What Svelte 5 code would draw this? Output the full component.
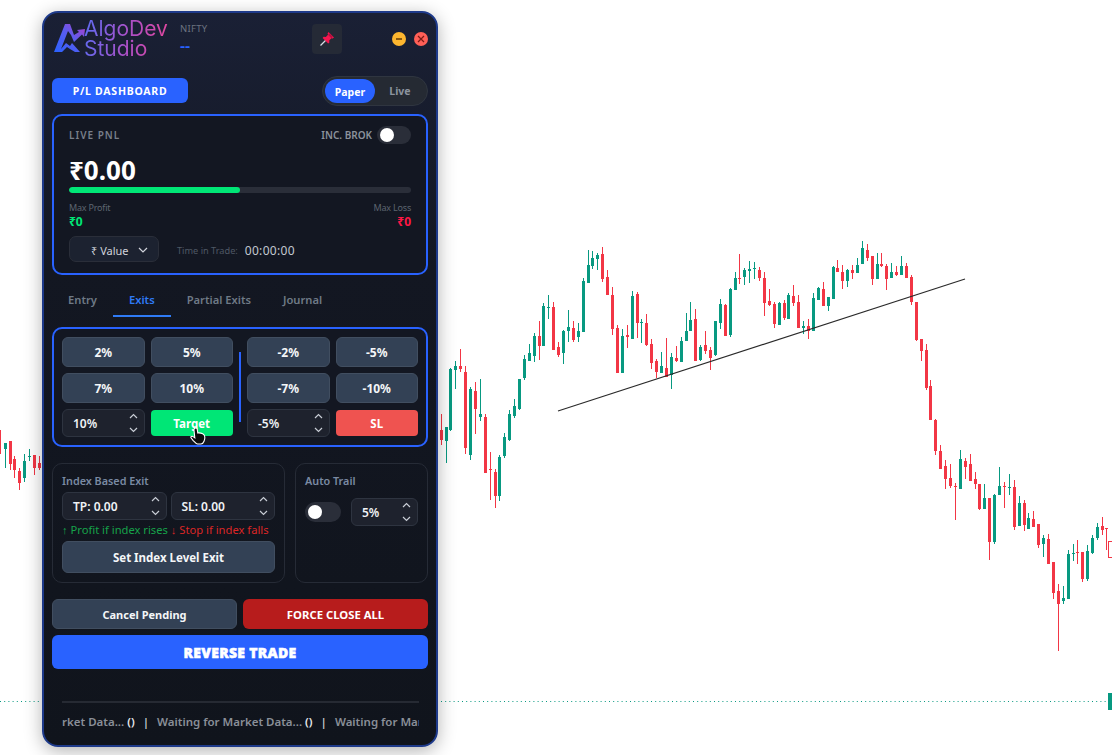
<script>
  // candles: x, wick top, body top, body bottom, wick bottom (3x crop coords), g/r
  const midA = `4 552 600 630 645 r,19 590 592 632 698 g,31 415 417 600 602 g,46 393 408 420 476 g,61 357 408 417 426 r,76 408 426 654 672 r,91 471 477 675 690 g,106 456 483 537 612 r,121 447 552 561 573 g,136 552 561 729 729 r,151 666 717 720 810 r,166 717 726 798 834 r,178 675 681 798 813 g,193 609 621 678 684 g,208 540 552 630 633 g,223 507 528 558 564 g,238 447 447 537 540 g,253 375 387 444 450 g,268 342 369 393 393 g,283 309 318 378 396 g,298 273 318 348 390 r,310 219 228 348 348 g,325 195 231 234 267 g,340 216 231 360 360 r,355 336 351 375 381 r,370 300 303 369 402 g,385 240 291 303 336 g,400 273 294 330 336 r,415 279 303 321 336 g,430 144 153 306 306 g,445 60 105 159 159 g,457 63 84 108 117 g,472 69 75 87 120 g,487 51 72 147 156 r,502 120 141 195 195 r,517 171 195 297 315 r,532 285 294 429 429 r,547 297 318 429 429 g,562 285 315 321 354 r,577 183 198 327 327 g,592 186 192 279 324 r,604 267 276 279 339 g,619 252 279 345 348 r,634 327 342 399 417 r,649 387 393 426 444 r,664 366 408 429 429 g,679 324 414 441 441 r,694 369 381 435 477 g,709 348 384 393 396 r,724 321 333 396 396 g,739 249 303 333 333 g,751 216 270 303 303 g,766 237 267 393 393 r,781 345 351 390 393 g,796 303 345 363 372 r,811 351 360 384 420 r,826 273 273 375 378 g,841 207 222 279 297 g,856 222 225 318 318 r,871 174 177 315 321 g,886 126 144 180 180 g,898 72 144 147 162 r,913 114 120 141 165 g,928 93 117 123 159 g,943 96 114 117 147 g,958 111 120 144 153 r,973 126 144 219 258 r,988 177 213 225 228 r,1003 216 222 282 294 r,1018 216 219 285 285 g`
  const midB = `13 210 219 264 270 r,25 189 195 267 267 g,40 165 198 219 228 r,55 195 216 294 294 r,70 273 288 294 312 g,85 267 288 303 327 r,100 189 204 303 303 g,115 171 174 210 210 g,130 156 177 228 228 r,145 201 201 228 243 g,160 108 111 207 207 g,172 90 114 126 126 r,187 105 126 153 177 r,202 117 120 153 171 g,217 105 120 129 147 r,232 84 105 129 129 g,247 33 54 102 102 g,262 42 60 84 93 r,277 78 78 147 165 r,292 69 102 147 147 g,304 69 102 108 111 r,319 102 108 147 180 r,334 99 126 144 144 g,349 108 126 135 138 r,364 78 108 135 135 g,379 99 108 144 144 r,394 135 141 216 225 r,409 216 216 330 333 r,424 327 327 363 393 r,439 342 360 474 480 r,451 450 468 570 570 r,466 567 570 663 675 r,481 645 663 717 717 r,496 690 708 747 777 r,511 702 744 768 774 r,526 759 768 771 870 r,541 660 687 777 777 g,556 684 693 711 747 r,571 672 702 753 753 r,586 726 747 762 777 r`
  const midC = `238 42 42 117 120 r,253 42 84 117 117 g,268 84 84 216 270 r,283 72 75 216 222 g,298 -9 48 75 75 g,313 36 48 51 114 r,328 12 51 54 75 g,343 30 51 171 180 r,358 78 99 168 168 g,373 90 99 165 183 r,385 129 144 177 177 g,400 123 147 171 171 r,415 162 162 225 234 r,430 195 204 222 261 g,445 192 207 282 282 r,460 276 276 369 387 r,475 342 363 402 543 r,490 348 384 393 402 g,505 240 252 387 387 g,520 222 249 252 273 g,532 210 246 249 282 r,547 246 246 327 336 r,562 225 243 327 333 g,577 195 204 249 252 g,592 159 171 204 210 g,607 141 168 180 195 r,619 174 174 174 240 r`
  const left = `-3 27 30 102 102 r,16 70 70 87 144 g,31 63 63 132 150 r,43 108 117 150 174 r,58 144 153 189 210 r,73 102 123 174 186 g,88 87 108 111 123 g,103 105 105 144 165 r,118 108 129 144 150 r`

  function parse(str, ox, oy) {
    return str.split(',').map((row) => {
      const p = row.split(' ')
      const n = p.slice(0, 5).map(Number)
      return {
        x: Math.round(ox + n[0] / 3),
        wt: Math.round(oy + n[1] / 3),
        bt: Math.round(oy + n[2] / 3),
        bb: Math.round(oy + n[3] / 3),
        wb: Math.round(oy + n[4] / 3),
        color: p[5] === 'g' ? '#089981' : '#f23645'
      }
    })
  }

  const candles = [
    ...parse(left, 0, 420),
    ...parse(midA, 440, 230),
    ...parse(midB, 780, 230),
    ...parse(midC, 900, 470)
  ]

  const exitsLeft = ['2%', '5%', '7%', '10%']
  const exitsRight = ['-2%', '-5%', '-7%', '-10%']
</script>

{#snippet spinner()}
  <svg class="spin" width="9" height="22" viewBox="0 0 9 22" fill="none" stroke="#c9ced6" stroke-width="1.2">
    <path d="M1 6 L4.5 2.5 L8 6" />
    <path d="M1 16 L4.5 19.5 L8 16" />
  </svg>
{/snippet}

<div class="desk">
  <svg class="chart" width="1112" height="755" viewBox="0 0 1112 755">
    {#each candles as c}
      <rect x={c.x} y={c.wt} width="1" height={Math.max(c.wb - c.wt, 1)} fill={c.color} />
      <rect x={c.x - 1} y={c.bt} width="3" height={Math.max(c.bb - c.bt, 1)} fill={c.color} />
    {/each}
    <line x1="558" y1="411" x2="965" y2="279" stroke="#2a2a2a" stroke-width="1.1" />
    <line x1="0" y1="701.5" x2="1108" y2="701.5" stroke="#089981" stroke-width="1" stroke-dasharray="1 3.2" />
    <rect x="1108" y="693" width="4" height="17" fill="#089981" />
    <rect x="1108.5" y="541.5" width="6" height="16" fill="#fff" stroke="#f23645" />
  </svg>

  <div class="panel">
    <header class="head">
      <div class="brand">
        <svg class="mark" width="34" height="32" viewBox="0 0 34 32" fill="none">
          <defs>
            <linearGradient id="mk" x1="0" y1="1" x2="1" y2="0">
              <stop offset="0" stop-color="#2962ff" />
              <stop offset="0.55" stop-color="#5a5cf0" />
              <stop offset="1" stop-color="#b03fc8" />
            </linearGradient>
          </defs>
          <path d="M1 29 L12 1 L17 1 L21 12 L26 9 L24 7 L32 6 L31 14 L29 11.5 L21 19 L18 12 L15 8 L8 26 L13 20 L17 23 L19 20 L27 29 L22 29 L17 26 L14 24 L9 29 Z" fill="url(#mk)" />
        </svg>
        <div class="word">AlgoDev<br />Studio</div>
      </div>
      <div class="sym">
        <span class="sym-name">NIFTY</span>
        <span class="sym-price">--</span>
      </div>
      <button class="pin" aria-label="Pin">
        <svg width="16" height="16" viewBox="0 0 16 16">
          <path d="M1.5 14.5 L7 9" stroke="#d8dde6" stroke-width="1.3" />
          <path d="M9.5 1 L15 6.5 L13.6 7.6 L12.4 7.2 L10.2 9.4 L10.4 11.6 L9.2 12.6 L3.6 7 L4.6 5.8 L6.8 6 L9 3.8 L8.6 2.4 Z" fill="#f5164f" />
          <path d="M10.6 2.2 L14 5.8 L12.4 7.2 L9 3.8 Z" fill="#b8103f" />
        </svg>
      </button>
      <div class="wins">
        <span class="dot min"><i></i></span>
        <span class="dot close">
          <svg width="8" height="8" viewBox="0 0 8 8" stroke="#7a1a14" stroke-width="1.2"><path d="M1 1 L7 7 M7 1 L1 7" /></svg>
        </span>
      </div>
    </header>

    <div class="actions">
      <button class="dash">P/L DASHBOARD</button>
      <div class="mode">
        <span class="mode-on">Paper</span>
        <span class="mode-off">Live</span>
      </div>
    </div>

    <section class="card pnl">
      <div class="pnl-top">
        <span class="pnl-label">LIVE PNL</span>
        <div class="brok">
          <span>INC. BROK</span>
          <span class="switch small"><i></i></span>
        </div>
      </div>
      <div class="pnl-value">₹0.00</div>
      <div class="bar"><div class="fill" style="width: 50%"></div></div>
      <div class="limits">
        <div>
          <div class="lim-label">Max Profit</div>
          <div class="lim-val up">₹0</div>
        </div>
        <div class="right">
          <div class="lim-label">Max Loss</div>
          <div class="lim-val down">₹0</div>
        </div>
      </div>
      <div class="pnl-foot">
        <div class="select">
          <span>₹ Value</span>
          <svg width="10" height="6" viewBox="0 0 10 6" fill="none" stroke="#d1d4dc" stroke-width="1.2"><path d="M1 1 L5 5 L9 1" /></svg>
        </div>
        <span class="time-label">Time in Trade:</span>
        <span class="time">00:00:00</span>
      </div>
    </section>

    <nav class="tabs">
      <span class="tab">Entry</span>
      <span class="tab active">Exits</span>
      <span class="tab">Partial Exits</span>
      <span class="tab">Journal</span>
    </nav>

    <section class="card exits">
      <div class="exit-grid">
        {#each exitsLeft as label}
          <button class="btn">{label}</button>
        {/each}
        <div class="field"><span>10%</span>{@render spinner()}</div>
        <button class="btn-target">Target</button>
      </div>
      <div class="divider"></div>
      <div class="exit-grid">
        {#each exitsRight as label}
          <button class="btn">{label}</button>
        {/each}
        <div class="field"><span>-5%</span>{@render spinner()}</div>
        <button class="btn-sl">SL</button>
      </div>
    </section>

    <div class="lower">
      <section class="box index">
        <div class="box-title">Index Based Exit</div>
        <div class="index-fields">
          <div class="field"><span>TP: 0.00</span>{@render spinner()}</div>
          <div class="field"><span>SL: 0.00</span>{@render spinner()}</div>
        </div>
        <div class="hint"><span class="hint-up">↑ Profit if index rises</span> <span class="hint-down">↓ Stop if index falls</span></div>
        <button class="btn set">Set Index Level Exit</button>
      </section>
      <section class="box trail">
        <div class="box-title">Auto Trail</div>
        <div class="trail-row">
          <span class="switch"><i></i></span>
          <div class="field"><span>5%</span>{@render spinner()}</div>
        </div>
      </section>
    </div>

    <div class="bottom-btns">
      <button class="btn cancel">Cancel Pending</button>
      <button class="force">FORCE CLOSE ALL</button>
    </div>
    <button class="reverse">REVERSE TRADE</button>

    <footer class="ticker">
      <div class="ticker-text">rket Data... <b>()</b><b class="sep">|</b>Waiting for Market Data... <b>()</b><b class="sep">|</b>Waiting for Market Data... <b>()</b></div>
    </footer>
  </div>

  <svg class="cursor" width="16" height="18" viewBox="0 0 16 18">
    <path d="M4.5 1.5 C5.5 0.5 7 1 7.2 2.2 L7.8 6 C9 5.6 12.5 6.2 14 7.8 C15 9.5 14.8 12.5 14 14.2 C13.4 15.8 12.5 17 11 17 L7.5 17 C6 16.8 4.5 15 3 13.4 L1 10.8 C0.6 9.8 1.6 8.8 2.8 9.4 L4.8 10.8 L4 3.2 C3.9 2.6 4.1 2 4.5 1.5 Z" fill="#0b0b0b" stroke="#fff" stroke-width="1.1" />
  </svg>
</div>

<style>
  :global(body) {
    margin: 0;
    background: #fff;
    overflow: hidden;
  }

  .desk {
    position: relative;
    width: 1112px;
    height: 755px;
    overflow: hidden;
    font-family: "Noto Sans", "Liberation Sans", sans-serif;
  }

  .chart {
    position: absolute;
    left: 0;
    top: 0;
  }

  .cursor {
    position: absolute;
    left: 190px;
    top: 427px;
  }

  button {
    font-family: inherit;
    border: none;
    margin: 0;
    padding: 0;
    color: #fff;
  }

  .panel {
    position: absolute;
    left: 42px;
    top: 11px;
    width: 396px;
    height: 736px;
    box-sizing: border-box;
    padding: 0 8px;
    display: flex;
    flex-direction: column;
    border: 2px solid #1e3a8a;
    border-radius: 16px;
    background: linear-gradient(180deg, #1a2035 0%, #131722 35%, #10141c 100%);
    box-shadow: 0 4px 18px rgba(0, 0, 0, 0.3);
  }

  .head {
    display: flex;
    align-items: center;
    height: 52px;
    margin-bottom: 11px;
    flex: none;
  }

  .brand {
    display: flex;
    align-items: center;
    width: 127px;
    margin-left: 1px;
  }

  .mark {
    flex: none;
  }

  .word {
    margin-left: -3px;
    font-family: Inter, sans-serif;
    font-size: 21px;
    line-height: 20px;
    font-weight: 400;
    background: linear-gradient(100deg, #5c6cf5 0%, #b04fc4 55%, #e8469a 100%);
    -webkit-background-clip: text;
    background-clip: text;
    color: transparent;
  }

  .sym {
    display: flex;
    flex-direction: column;
    width: 132px;
  }

  .sym-name {
    font-size: 9.5px;
    line-height: 13px;
    letter-spacing: 0.3px;
    color: #6b7280;
  }

  .sym-price {
    font-size: 16px;
    line-height: 22px;
    font-weight: 600;
    color: #2962ff;
  }

  .pin {
    width: 30px;
    height: 30px;
    display: flex;
    align-items: center;
    justify-content: center;
    background: #252a36;
    border-radius: 4px;
  }

  .wins {
    display: flex;
    gap: 8px;
    margin-left: auto;
  }

  .dot {
    width: 14px;
    height: 14px;
    border-radius: 50%;
    display: flex;
    align-items: center;
    justify-content: center;
  }

  .dot.min {
    background: #fdb62f;
  }

  .dot.min i {
    width: 6px;
    height: 1.5px;
    background: #8a5a10;
  }

  .dot.close {
    background: #ff5f57;
  }

  .actions {
    display: flex;
    align-items: center;
    justify-content: space-between;
    flex: none;
    height: 30px;
    margin-bottom: 8px;
  }

  .dash {
    width: 136px;
    height: 25px;
    margin-top: -1px;
    background: #2962ff;
    border-radius: 6px;
    font-size: 10.5px;
    font-weight: 700;
    letter-spacing: 0.75px;
  }

  .mode {
    box-sizing: border-box;
    width: 106px;
    height: 30px;
    padding: 2px;
    display: flex;
    align-items: center;
    background: #252a33;
    border: 1px solid #2f3540;
    border-radius: 15px;
    font-size: 10.5px;
    font-weight: 700;
  }

  .mode-on {
    width: 50px;
    height: 24px;
    line-height: 26px;
    text-align: center;
    border-radius: 12px;
    background: #2962ff;
    color: #fff;
  }

  .mode-off {
    flex: 1;
    line-height: 26px;
    text-align: center;
    color: #8b939e;
  }

  .card {
    box-sizing: border-box;
    flex: none;
    border: 2px solid #2962ff;
    border-radius: 10px;
    background: #131722;
  }

  .pnl {
    height: 161px;
    padding: 9px 15px 0;
  }

  .pnl-top {
    display: flex;
    align-items: center;
    justify-content: space-between;
    height: 20px;
  }

  .pnl-label {
    font-size: 10px;
    font-weight: 600;
    letter-spacing: 1px;
    color: #787f8a;
  }

  .brok {
    display: flex;
    align-items: center;
    gap: 5px;
    font-size: 10px;
    font-weight: 600;
    color: #8b929c;
  }

  .switch {
    position: relative;
    display: block;
    flex: none;
    width: 36px;
    height: 20px;
    border-radius: 10px;
    background: #2a2e39;
  }

  .switch i {
    position: absolute;
    left: 3px;
    top: 3px;
    width: 14px;
    height: 14px;
    border-radius: 50%;
    background: #fff;
  }

  .switch.small {
    width: 34px;
    height: 18px;
    border-radius: 9px;
  }

  .switch.small i {
    top: 2px;
  }

  .pnl-value {
    margin-top: 10px;
    font-size: 26px;
    line-height: 31px;
    font-weight: 700;
    color: #fff;
  }

  .bar {
    height: 6px;
    margin-top: 1px;
    border-radius: 3px;
    background: #2a2e39;
    overflow: hidden;
  }

  .fill {
    height: 100%;
    border-radius: 3px;
    background: #00e676;
  }

  .limits {
    display: flex;
    justify-content: space-between;
    margin-top: 8px;
  }

  .right {
    text-align: right;
  }

  .lim-label {
    font-size: 9px;
    letter-spacing: -0.2px;
    line-height: 13px;
    color: #5d6570;
  }

  .lim-val {
    font-size: 12px;
    line-height: 15px;
    font-weight: 700;
  }

  .up {
    color: #00e676;
  }

  .down {
    color: #ff1744;
  }

  .pnl-foot {
    display: flex;
    align-items: center;
    margin-top: 7px;
  }

  .select {
    box-sizing: border-box;
    width: 90px;
    height: 26px;
    padding: 2px 0 0 21px;
    display: flex;
    align-items: center;
    gap: 9px;
    background: #1c2230;
    border: 1px solid #2a2e39;
    border-radius: 7px;
    font-size: 11px;
    color: #d1d4dc;
  }

  .time-label {
    margin: 2px 0 0 18px;
    font-size: 9.2px;
    color: #4f5865;
  }

  .time {
    margin: 2px 0 0 7px;
    font-size: 12px;
    letter-spacing: 0.3px;
    color: #c3c8d0;
  }

  .tabs {
    display: flex;
    flex: none;
    height: 33px;
    margin: 9px 0 10px;
  }

  .tab {
    padding: 0 16px;
    height: 33px;
    box-sizing: border-box;
    line-height: 31px;
    font-size: 11.2px;
    font-weight: 600;
    color: #6f7a86;
  }

  .tab.active {
    color: #2f7bf6;
    border-bottom: 2px solid #2f7bf6;
  }

  .exits {
    display: flex;
    height: 120px;
    padding: 8px 8px 0;
    gap: 6px;
  }

  .exit-grid {
    flex: 1;
    display: grid;
    grid-template-columns: 1fr 1fr;
    grid-template-rows: 30px 30px 28px;
    gap: 6px;
  }

  .divider {
    flex: none;
    width: 2px;
    height: 70px;
    margin-top: 15px;
    background: #2962ff;
  }

  .btn {
    box-sizing: border-box;
    background: #334155;
    border: 1px solid #414e60;
    border-radius: 6px;
    font-size: 12px;
    font-weight: 700;
    color: #f4f6f8;
  }

  .btn-target,
  .btn-sl {
    height: 26px;
    border-radius: 4px;
    font-size: 11.5px;
    font-weight: 700;
    margin-top: 1px;
  }

  .btn-target {
    background: #00e676;
  }

  .btn-sl {
    background: #ef5350;
  }

  .field {
    box-sizing: border-box;
    height: 28px;
    padding: 0 6px 0 10px;
    display: flex;
    align-items: center;
    justify-content: space-between;
    background: #1e222d;
    border: 1px solid #2e3440;
    border-radius: 6px;
    font-size: 12px;
    font-weight: 600;
    color: #f0f2f5;
  }

  .lower {
    display: flex;
    flex: none;
    gap: 10px;
    height: 120px;
    margin: 16px 0;
  }

  .box {
    box-sizing: border-box;
    border: 1px solid #262b36;
    border-radius: 10px;
    padding: 9px;
  }

  .index {
    width: 233px;
    display: flex;
    flex-direction: column;
  }

  .trail {
    flex: 1;
  }

  .box-title {
    font-size: 10.8px;
    line-height: 16px;
    font-weight: 600;
    color: #7a8aa3;
  }

  .index-fields {
    display: flex;
    gap: 4px;
    margin-top: 3px;
  }

  .index-fields .field {
    flex: 1;
  }

  .hint {
    height: 20px;
    line-height: 20px;
    font-size: 11.2px;
    white-space: nowrap;
  }

  .hint-up {
    color: #16a34a;
  }

  .hint-down {
    color: #dc2626;
  }

  .set {
    height: 32px;
    margin-top: 1px;
    font-size: 11.5px;
  }

  .trail-row {
    display: flex;
    align-items: center;
    justify-content: space-between;
    margin-top: 9px;
  }

  .trail-row .field {
    width: 67px;
  }

  .bottom-btns {
    display: grid;
    grid-template-columns: 1fr 1fr;
    flex: none;
    gap: 6px;
    height: 30px;
    margin-bottom: 6px;
  }

  .cancel {
    font-size: 11px;
  }

  .force {
    background: #b71c1c;
    border-radius: 6px;
    font-size: 11.3px;
    font-weight: 700;
  }

  .reverse {
    flex: none;
    height: 34px;
    background: #2962ff;
    border-radius: 6px;
    font-size: 14px;
    font-weight: 900;
    letter-spacing: 0.3px;
    -webkit-text-stroke: 0.5px #fff;
  }

  .ticker {
    flex: none;
    margin: auto 9px 0 10px;
    height: 42px;
    border-top: 2px solid #262a33;
    overflow: hidden;
  }

  .ticker-text {
    margin-top: 9px;
    white-space: nowrap;
    font-size: 11.5px;
    line-height: 20px;
    font-weight: 600;
    color: #8a8f98;
  }

  .ticker-text b {
    font-weight: 600;
    color: #e8eaee;
  }

  .ticker-text .sep {
    margin: 0 8px;
    color: #c9cdd3;
  }
</style>
